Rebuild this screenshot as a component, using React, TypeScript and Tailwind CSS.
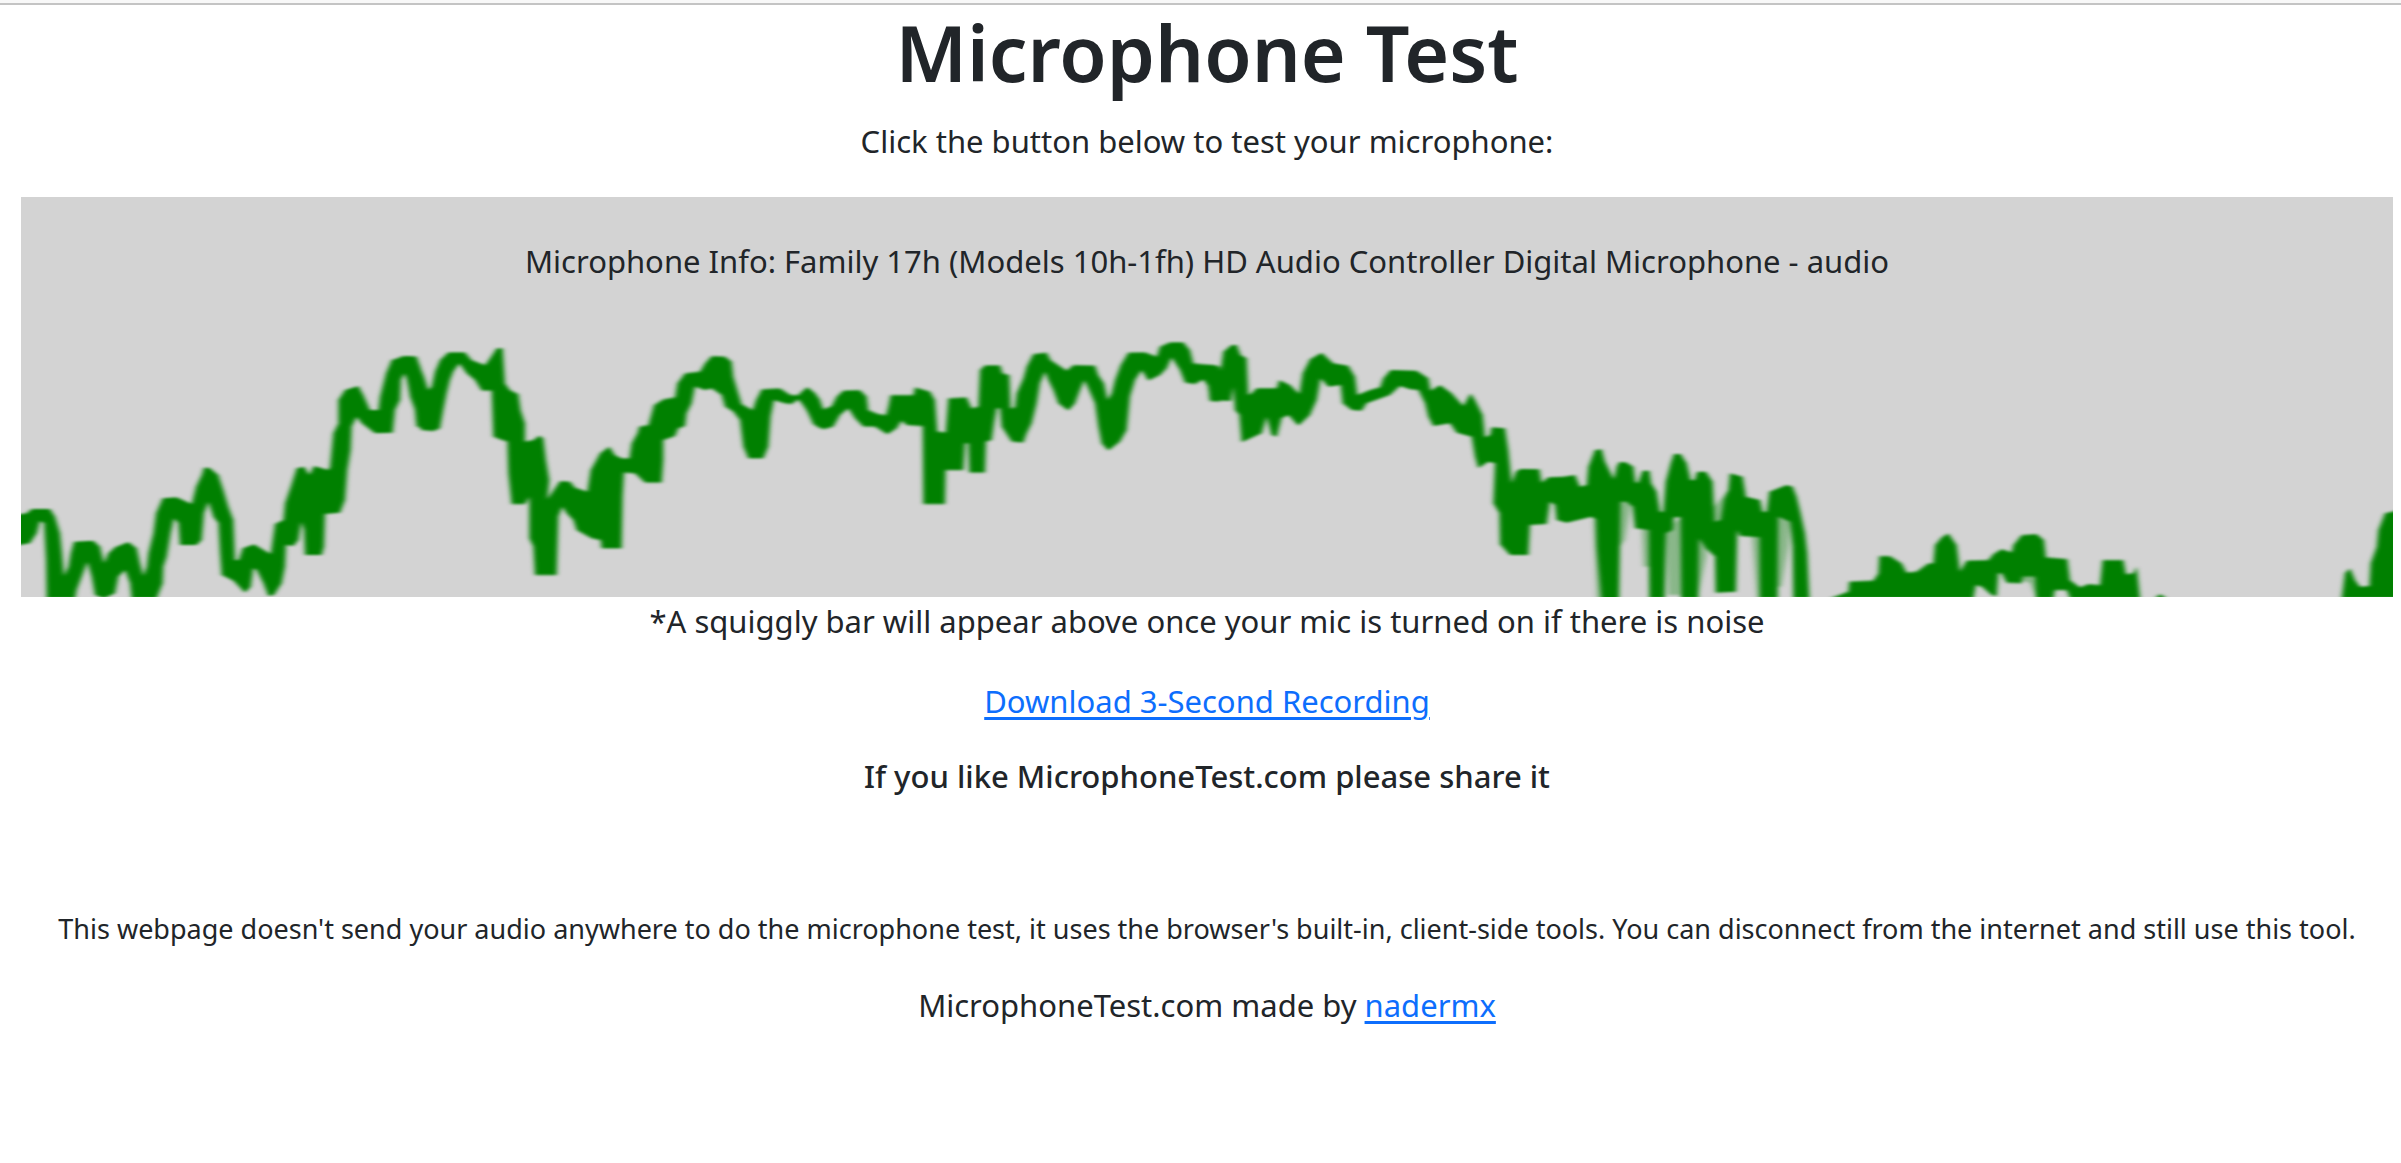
import { ReactNode } from 'react';

type TracePart = {
  x: number;
  points: string;
};

// outline of the signal, cut into parts that each start at their own x
const TRACE_PARTS: TracePart[] = [
  {
    x: -63,
    points:
      '40,645 80,640 95,627 150,627 165,650 180,700 186,760 192,828 205,800 212,760 222,725 280,722 300,740 312,790 325,760 345,742 385,726 410,745 420,790 430,828 440,800 445,760 460,700 468,640 488,595 530,592 575,612 588,560 605,525 612,503 628,503 655,525 670,570 685,620 700,660 705,780 716,780 728,745 762,733 812,762 818,720 825,672 850,660 855,610 872,560 890,505 912,500 928,525 942,498 985,510 990,500 1000,400 1015,370 1015,300 1035,270 1075,258 1090,285 1110,330 1135,330 1140,290 1158,220 1175,180 1215,168 1250,170 1260,200 1260,380 1250,380 1245,330 1230,290 1222,240 1213,220 1203,240 1200,300 1185,330 1178,398 1125,400 1105,385 1085,370 1070,350 1055,380 1052,450 1042,510 1035,600 1020,638 975,642 972,740 965,765 915,765 912,690 904,665 895,720 880,738 858,735 855,800 845,850 822,885 805,888 790,850 770,810 760,805 752,860 735,878 700,842 665,825 660,760 655,670 640,650 625,605 612,640 605,720 590,735 540,735 535,670 522,655 512,700 500,770 490,800 488,850 470,895 395,895 390,850 375,810 355,830 345,880 312,895 285,885 275,830 262,785 245,830 230,870 225,895 140,895 138,780 132,670 120,663 110,700 90,730 40,738',
  },
  {
    x: 1137,
    points:
      '0,170 45,170 60,200 72,230 85,270 95,260 105,215 120,180 145,157 195,157 215,180 255,195 270,175 290,145 308,145 315,250 330,270 355,282 362,330 375,370 375,425 400,420 418,407 430,415 438,480 448,540 442,598 460,572 480,543 510,545 525,563 562,575 572,510 600,460 628,440 645,465 665,475 688,475 695,430 712,400 718,380 745,375 755,340 762,315 790,298 825,292 832,250 855,220 900,215 915,190 935,168 975,170 995,185 1000,230 1015,280 1025,312 1058,330 1068,300 1085,268 1140,265 1172,285 1195,285 1222,262 1245,280 1260,300 1260,385 1240,370 1230,345 1210,315 1195,298 1175,312 1155,310 1122,300 1112,350 1105,440 1090,475 1045,475 1030,440 1020,360 1000,335 975,320 965,285 935,265 915,270 885,260 875,310 860,340 855,378 835,385 825,408 790,420 790,480 785,548 735,548 705,520 672,518 668,590 665,745 605,745 602,720 575,715 530,690 520,660 500,640 487,620 475,650 470,825 405,825 400,740 388,715 388,590 375,612 335,612 325,520 322,425 300,418 280,410 275,272 245,272 225,240 200,220 178,190 160,215 150,240 140,280 130,330 120,385 100,393 65,390 50,370 45,320 30,280 15,215 5,225',
  },
  {
    x: 2337,
    points:
      '0,280 22,262 45,280 60,300 70,328 95,318 110,290 130,272 180,270 200,290 205,330 235,342 258,345 265,320 272,285 340,285 345,262 390,275 405,300 412,395 437,397 445,295 500,292 515,325 535,320 540,210 555,196 600,196 608,220 628,225 632,325 645,322 650,280 670,235 680,200 700,162 740,158 752,180 775,195 800,212 820,195 885,197 895,225 912,250 923,300 935,280 945,240 962,195 985,158 1035,157 1070,170 1080,140 1110,127 1150,127 1170,150 1180,190 1235,195 1260,200 1260,305 1230,303 1225,260 1210,238 1185,252 1155,248 1140,210 1115,172 1100,205 1080,225 1045,242 1025,210 1005,240 990,290 980,390 960,425 925,452 905,430 895,380 885,310 865,265 853,240 840,270 825,310 805,332 775,310 760,270 745,240 735,215 720,250 710,310 695,370 680,400 670,428 635,425 605,380 600,325 590,325 582,370 575,420 558,425 555,518 508,518 505,430 495,430 490,510 437,510 435,612 370,612 368,378 320,375 305,362 290,385 262,403 225,380 190,380 165,355 145,325 120,345 100,380 70,388 40,372 20,330 0,300',
  },
  {
    x: 3537,
    points:
      '0,195 45,195 62,210 70,155 95,135 110,135 122,165 140,175 145,285 155,280 170,265 230,265 238,240 270,255 298,282 308,220 330,178 365,158 400,190 445,197 465,230 472,285 510,270 540,262 550,235 572,210 650,212 685,235 692,272 720,255 755,280 790,318 812,280 825,300 848,345 855,412 870,405 875,382 915,385 925,450 935,550 948,515 960,507 1018,508 1025,548 1045,532 1090,530 1125,525 1140,560 1160,555 1165,500 1185,450 1205,448 1215,485 1240,540 1258,487 1265,487 1265,600 1255,600 1252,900 1205,900 1190,740 1188,660 1175,650 1100,668 1070,660 1065,615 1050,605 1040,672 990,675 985,765 930,765 900,733 898,640 880,610 885,490 865,485 835,505 825,470 815,410 770,398 750,370 700,378 685,350 675,310 655,270 630,268 600,258 570,285 500,310 485,332 455,330 428,310 422,255 385,260 362,235 350,300 330,345 295,377 265,345 245,355 230,410 215,405 200,350 185,400 125,427 118,345 105,330 100,260 92,303 30,300 22,240 0,238',
  },
  {
    x: 4737,
    points:
      '0,450 12,480 30,515 42,540 50,500 58,487 78,487 100,500 106,545 114,550 128,512 148,512 154,550 170,575 180,635 190,635 197,545 212,490 222,462 242,462 260,490 272,540 284,540 292,515 318,515 338,545 344,665 362,660 372,600 385,570 390,520 428,530 438,590 480,600 488,635 500,635 508,575 560,555 578,560 590,590 602,640 615,700 622,760 628,895 580,895 578,740 570,665 535,650 533,895 480,895 478,712 420,708 412,690 408,875 347,878 345,770 318,745 297,715 295,895 243,895 241,652 222,652 218,690 198,700 194,895 148,895 146,690 105,685 98,620 80,605 62,605 57,895 8,895 5,660 0,660',
  },
  {
    x: 4737,
    points:
      '690,895 745,875 748,845 820,842 835,820 838,768 870,768 905,790 920,818 950,815 985,790 1000,790 1005,735 1025,712 1045,700 1070,735 1080,815 1100,782 1165,780 1180,762 1205,747 1235,757 1235,848 1220,848 1205,820 1195,820 1190,888 1175,885 1145,860 1128,855 1120,895',
  },
  {
    x: 5907,
    points:
      '50,757 65,757 70,735 95,705 140,702 162,720 168,772 232,777 240,840 270,862 295,852 330,855 338,780 400,780 408,822 430,820 440,800 450,895 240,895 230,870 195,870 190,895 138,895 135,830 98,830 95,850 50,848',
  },
  { x: 5907, points: '495,895 510,882 530,895' },
  {
    x: 5907,
    points:
      '1055,895 1065,820 1080,805 1095,840 1110,860 1138,858 1142,790 1160,740 1165,690 1185,640 1230,630 1230,895',
  },
];

// half transparent columns between the spikes
const FADED_PARTS: TracePart[] = [
  { x: 4737, points: '198,690 240,655 240,885 205,885' },
  { x: 4737, points: '535,650 570,660 565,740 545,860 535,860' },
  { x: 4737, points: '125,680 148,680 148,800 130,800' },
  { x: 4737, points: '297,700 320,740 320,770 297,880' },
  { x: 4737, points: '342,620 385,570 385,665 342,665' },
  { x: 4737, points: '55,600 95,600 75,720 60,740' },
  { x: 4737, points: '455,700 480,700 480,895 470,895' },
  { x: 3537, points: '1180,660 1205,660 1205,895 1190,895' },
  { x: 5907, points: '95,780 138,780 138,890 120,850 95,840' },
];

const Waveform = () => (
  <svg
    className="block w-full h-full"
    viewBox="0 -309 7116 1200"
    preserveAspectRatio="none"
    role="img"
    aria-label="Microphone signal"
  >
    <defs>
      <filter id="soften" x="0" y="-309" width="7116" height="1200" filterUnits="userSpaceOnUse">
        <feGaussianBlur stdDeviation="8 3" />
      </filter>
    </defs>
    <g fill="#008000" filter="url(#soften)">
      {TRACE_PARTS.map(({ x, points }) => (
        <polygon key={points} points={points} transform={`translate(${x} 0)`} />
      ))}
      <g opacity="0.35">
        {FADED_PARTS.map(({ x, points }) => (
          <polygon key={points} points={points} transform={`translate(${x} 0)`} />
        ))}
      </g>
    </g>
  </svg>
);

const TextLink = ({ href, children }: { href: string; children: ReactNode }) => (
  <a href={href} className="text-[#0d6efd] underline decoration-[3px] underline-offset-4">
    {children}
  </a>
);

const App = () => {
  return (
    <div className="min-h-screen bg-white border-t-[3px] border-[#f8f8f8] font-['Noto_Sans',sans-serif] text-[31px] leading-[48px] text-[#212529]">
      <main className="border-t-2 border-[#c4c4c4] pl-[21px] pr-2 text-center">
        <h1 className="text-[77px] leading-[96px] font-semibold">Microphone Test</h1>
        <p className="mt-4 mb-8">Click the button below to test your microphone:</p>
        <div className="relative h-[400px] bg-[#d3d3d3] overflow-hidden">
          <Waveform />
          <p className="absolute inset-x-0 top-10">
            Microphone Info: Family 17h (Models 10h-1fh) HD Audio Controller Digital Microphone -
            audio
          </p>
        </div>
        <p>*A squiggly bar will appear above once your mic is turned on if there is noise</p>
        <p className="my-8">
          <TextLink href="#download">Download 3-Second Recording</TextLink>
        </p>
        <h2 className="leading-[38px] font-medium">If you like MicrophoneTest.com please share it</h2>
        <p className="mt-28 mb-[30px] text-[27px] leading-[44px]">
          This webpage doesn't send your audio anywhere to do the microphone test, it uses the
          browser's built-in, client-side tools. You can disconnect from the internet and still use
          this tool.
        </p>
        <p>
          MicrophoneTest.com made by <TextLink href="#nadermx">nadermx</TextLink>
        </p>
      </main>
    </div>
  );
};

export default App;
